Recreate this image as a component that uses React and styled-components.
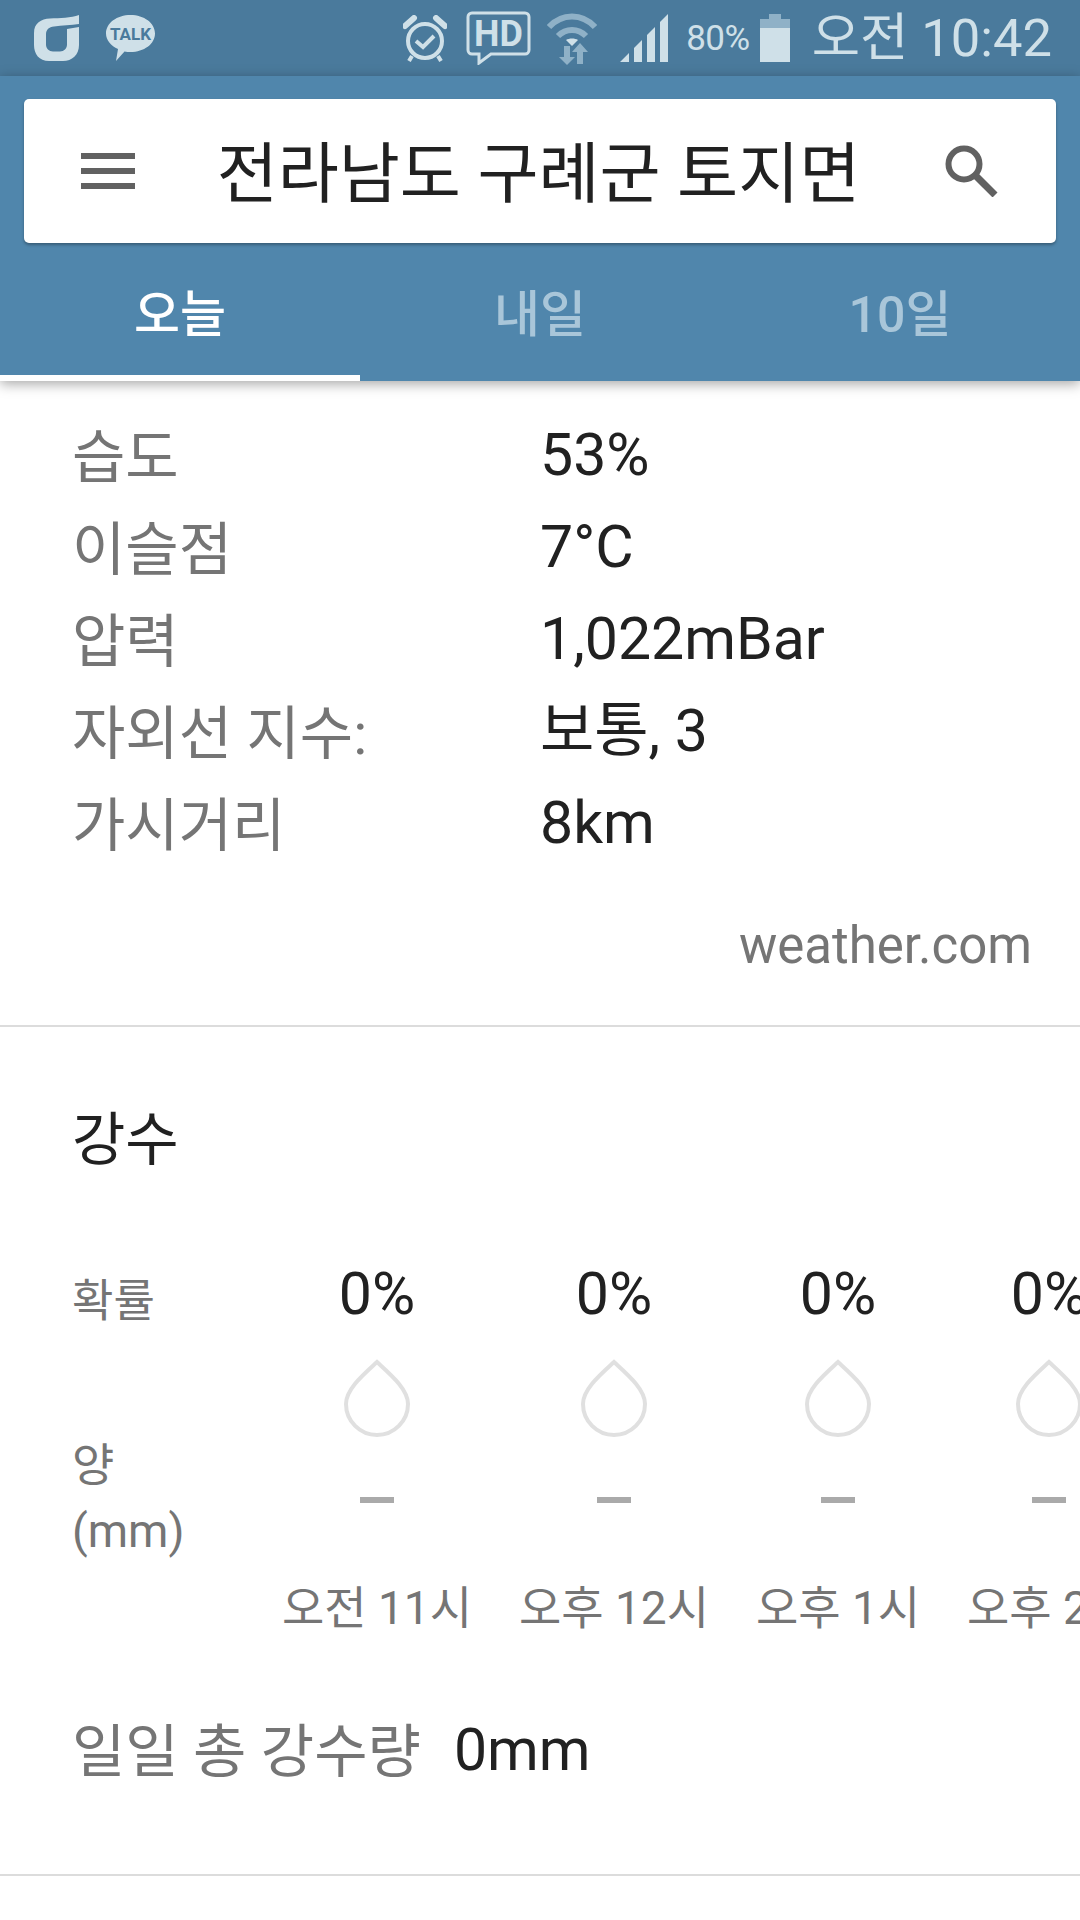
import React from "react";
import styled, { createGlobalStyle } from "styled-components";

const FONT = `Roboto, "Noto Sans CJK KR", sans-serif`;
const STATUS_ICON = "#cfe0e8";
const STATUS_DIM = "#8fb1c7";

const GlobalStyle = createGlobalStyle`
  html, body {
    margin: 0;
    padding: 0;
    background: #fff;
  }
  body {
    font-family: ${FONT};
  }
`;

const Page = styled.div`
  width: 1080px;
  height: 1920px;
  overflow: hidden;
  background: #fff;
`;

const StatusBar = styled.div`
  height: 76px;
  background: #4a7a9c;
  display: flex;
  align-items: center;
  justify-content: space-between;
  padding: 0 28px 0 34px;
  color: ${STATUS_ICON};
`;

const StatusGroup = styled.div`
  display: flex;
  align-items: center;
`;

const StatusIcon = styled.svg`
  display: block;
  flex: none;
  margin-left: ${(p) => p.$gap || 0}px;
`;

const BatteryText = styled.span`
  font-size: 35px;
  line-height: 1;
  margin-left: 18px;
  letter-spacing: -0.5px;
`;

const Clock = styled.span`
  font-size: 52.5px;
  line-height: 1;
  margin-left: 22px;
`;

const AppHeader = styled.header`
  position: relative;
  padding-top: 23px;
  background: #5086ac;
  box-shadow: 0 3px 12px rgba(0, 0, 0, 0.35);
`;

const SearchCard = styled.div`
  height: 144px;
  margin: 0 24px;
  background: #fff;
  border-radius: 5px;
  box-shadow: 0 2px 3px rgba(0, 0, 0, 0.3);
  display: flex;
  align-items: center;
  padding: 0 58px 0 57px;
`;

const CardIcon = styled.svg`
  display: block;
  flex: none;
`;

const CardTitle = styled.div`
  flex: 1;
  padding: 5px 3px 0 0;
  text-align: center;
  font-size: 66.4px;
  line-height: 80px;
  color: #212121;
  white-space: nowrap;
`;

const Tabs = styled.nav`
  display: flex;
  height: 138px;
`;

const Tab = styled.div`
  flex: 1;
  display: flex;
  align-items: center;
  justify-content: center;
  padding-top: 12px;
  box-sizing: border-box;
  font-size: 50px;
  line-height: 60px;
  font-weight: 500;
  color: ${(p) => (p.$active ? "#fff" : "#a9c6d9")};
  border-bottom: 6px solid ${(p) => (p.$active ? "#fff" : "transparent")};
`;

const Details = styled.section`
  padding: 28px 40px 0 72px;
  height: 646px;
  box-sizing: border-box;
  border-bottom: 2px solid #dcdcdc;
`;

const DetailRow = styled.div`
  display: flex;
  height: 92px;
  line-height: 92px;
`;

const DetailLabel = styled.span`
  width: 468px;
  padding-top: 3px;
  font-size: 58px;
  color: #757575;
`;

const DetailValue = styled.span`
  font-size: 59px;
  color: #212121;
`;

const Source = styled.div`
  margin-top: 42px;
  margin-right: 8px;
  text-align: right;
  font-size: 51px;
  line-height: 70px;
  color: #757575;
`;

const Rain = styled.section`
  padding: 73px 0 84px 72px;
  border-bottom: 2px solid #dcdcdc;
`;

const RainTitle = styled.h2`
  margin: 0 0 74px;
  font-size: 58px;
  line-height: 80px;
  font-weight: 400;
  color: #212121;
`;

const Chart = styled.div`
  display: flex;
`;

const ChartLabels = styled.div`
  width: 212px;
  flex: none;
  padding-top: 18px;
`;

const ChartLabel = styled.div`
  font-size: ${(p) => p.$size}px;
  line-height: ${(p) => p.$line}px;
  color: #757575;
  margin-top: ${(p) => p.$top || 0}px;
`;

const Hours = styled.div`
  display: flex;
  gap: 51px;
`;

const Hour = styled.div`
  display: flex;
  flex-direction: column;
  align-items: center;
  flex: none;
  width: ${(p) => p.$width}px;
`;

const Percent = styled.div`
  font-size: 59px;
  line-height: 80px;
  color: #212121;
`;

const Drop = styled.svg`
  display: block;
  margin-top: 25px;
`;

const Dash = styled.div`
  width: 34px;
  height: 6px;
  margin-top: 60px;
  background: #aaa;
`;

const HourLabel = styled.div`
  margin-top: 75px;
  font-size: 46px;
  line-height: 60px;
  color: #757575;
  white-space: nowrap;
`;

const Total = styled.div`
  margin-top: 72px;
  display: flex;
  height: 80px;
  line-height: 80px;
`;

const TotalLabel = styled.span`
  padding-top: 2px;
  font-size: 58px;
  color: #757575;
  margin-right: 33px;
`;

const details = [
  ["습도", "53%"],
  ["이슬점", "7°C"],
  ["압력", "1,022mBar"],
  ["자외선 지수:", "보통, 3"],
  ["가시거리", "8km"],
];

const hours = [
  { label: "오전 11시", width: 186 },
  { label: "오후 12시", width: 186 },
  { label: "오후 1시", width: 160 },
  { label: "오후 2시", width: 160 },
];

const OllehIcon = () => (
  <StatusIcon width="46" height="46" viewBox="0 0 46 46">
    <path
      fill={STATUS_ICON}
      d="M45 0v9c-8 1-17 1.5-25 2.5-5 .6-8 3-8 8v10c0 4 3 7 7 7h7c4 0 7-3 7-7V14l12-2v18c0 10-7 16-16 16H15C5 46 0 39 0 30V18C0 8 7 4 16 3.5 26 3 37 3 45 0z"
    />
  </StatusIcon>
);

const TalkIcon = () => (
  <StatusIcon $gap={26} width="49" height="46" viewBox="0 0 49 46">
    <path
      fill={STATUS_ICON}
      d="M24.5 0C38 0 49 8 49 18.5S38 37 24.5 37c-2 0-4 0-6-.5L10 46l2-12C5 31 0 25 0 18.5 0 8 11 0 24.5 0z"
    />
    <text
      x="24.5"
      y="24.5"
      textAnchor="middle"
      fontFamily="Roboto, sans-serif"
      fontWeight="700"
      fontSize="17"
      fill="#4a7a9c"
    >
      TALK
    </text>
  </StatusIcon>
);

const AlarmIcon = () => (
  <StatusIcon width="44" height="47" viewBox="0 0 44 47" fill="none" stroke={STATUS_ICON}>
    <circle cx="22" cy="26" r="17" strokeWidth="4" />
    <path d="M13 26l7 6 11-11" strokeWidth="4" />
    <path d="M2 11L11 3M42 11L33 3" strokeWidth="6" strokeLinecap="round" />
    <path d="M9 41l-3 5M35 41l3 5" strokeWidth="4" />
  </StatusIcon>
);

const HdIcon = () => (
  <StatusIcon $gap={19} width="65" height="54" viewBox="0 0 65 54">
    <path
      fill="none"
      stroke={STATUS_ICON}
      strokeWidth="3"
      d="M6 2h53a4 4 0 0 1 4 4v33a4 4 0 0 1-4 4H25L13 52v-9H6a4 4 0 0 1-4-4V6a4 4 0 0 1 4-4z"
    />
    <text
      x="32.5"
      y="35"
      textAnchor="middle"
      fontFamily="Roboto, sans-serif"
      fontWeight="700"
      fontSize="36"
      fill={STATUS_ICON}
    >
      HD
    </text>
  </StatusIcon>
);

const WifiIcon = () => (
  <StatusIcon $gap={16} width="50" height="53" viewBox="0 0 50 53" fill="none" stroke={STATUS_DIM}>
    <path d="M2 15C15 1 35 1 48 15" strokeWidth="6" />
    <path d="M11 24c8-8 20-8 28 0" strokeWidth="6" />
    <path fill={STATUS_ICON} stroke="none" d="M19 28c3-2 9-2 12 0l-6 6z" />
    <path fill={STATUS_DIM} stroke="none" d="M17 34h6v11h5l-8 8-8-8h5zM33 31l8 9h-5v12h-6V40h-5z" />
  </StatusIcon>
);

const SignalIcon = () => (
  <StatusIcon $gap={23} width="48" height="48" viewBox="0 0 48 48">
    <path
      fill={STATUS_ICON}
      d="M0 48L9 39v9zM14 34l8-8v22h-8zM27 21l8-8v35h-8zM40 8l8-8v48h-8z"
    />
  </StatusIcon>
);

const BatteryIcon = () => (
  <StatusIcon $gap={10} width="30" height="48" viewBox="0 0 30 48">
    <path fill={STATUS_DIM} d="M9 0h12v5h9v9H0V5h9z" />
    <path fill={STATUS_ICON} d="M0 14h30v34H0z" />
  </StatusIcon>
);

const MenuIcon = () => (
  <CardIcon width="54" height="36" viewBox="0 0 54 36" fill="#616161">
    <rect y="0" width="54" height="6" />
    <rect y="15" width="54" height="6" />
    <rect y="30" width="54" height="6" />
  </CardIcon>
);

const SearchIcon = () => (
  <CardIcon width="53" height="52" viewBox="0 0 53 52" fill="none" stroke="#616161">
    <circle cx="19" cy="19" r="15.5" strokeWidth="6" />
    <path d="M30 30l20 20" strokeWidth="7" />
  </CardIcon>
);

const DropIcon = () => (
  <Drop width="66" height="78" viewBox="0 0 66 78" fill="none" stroke="#e0e0e0">
    <path
      strokeWidth="4"
      d="M33 3C20 15 2 30 2 45c0 17 14 31 31 31s31-14 31-31C64 30 46 15 33 3z"
    />
  </Drop>
);

export default function App() {
  return (
    <Page>
      <GlobalStyle />
      <StatusBar>
        <StatusGroup>
          <OllehIcon />
          <TalkIcon />
        </StatusGroup>
        <StatusGroup>
          <AlarmIcon />
          <HdIcon />
          <WifiIcon />
          <SignalIcon />
          <BatteryText>80%</BatteryText>
          <BatteryIcon />
          <Clock>오전 10:42</Clock>
        </StatusGroup>
      </StatusBar>
      <AppHeader>
        <SearchCard>
          <MenuIcon />
          <CardTitle>전라남도 구례군 토지면</CardTitle>
          <SearchIcon />
        </SearchCard>
        <Tabs>
          <Tab $active>오늘</Tab>
          <Tab>내일</Tab>
          <Tab>10일</Tab>
        </Tabs>
      </AppHeader>
      <Details>
        {details.map(([label, value]) => (
          <DetailRow key={label}>
            <DetailLabel>{label}</DetailLabel>
            <DetailValue>{value}</DetailValue>
          </DetailRow>
        ))}
        <Source>weather.com</Source>
      </Details>
      <Rain>
        <RainTitle>강수</RainTitle>
        <Chart>
          <ChartLabels>
            <ChartLabel $size={45} $line={60}>확률</ChartLabel>
            <ChartLabel $size={46} $line={66} $top={100}>
              양
              <br />
              (mm)
            </ChartLabel>
          </ChartLabels>
          <Hours>
            {hours.map((hour) => (
              <Hour key={hour.label} $width={hour.width}>
                <Percent>0%</Percent>
                <DropIcon />
                <Dash />
                <HourLabel>{hour.label}</HourLabel>
              </Hour>
            ))}
          </Hours>
        </Chart>
        <Total>
          <TotalLabel>일일 총 강수량</TotalLabel>
          <DetailValue>0mm</DetailValue>
        </Total>
      </Rain>
    </Page>
  );
}
